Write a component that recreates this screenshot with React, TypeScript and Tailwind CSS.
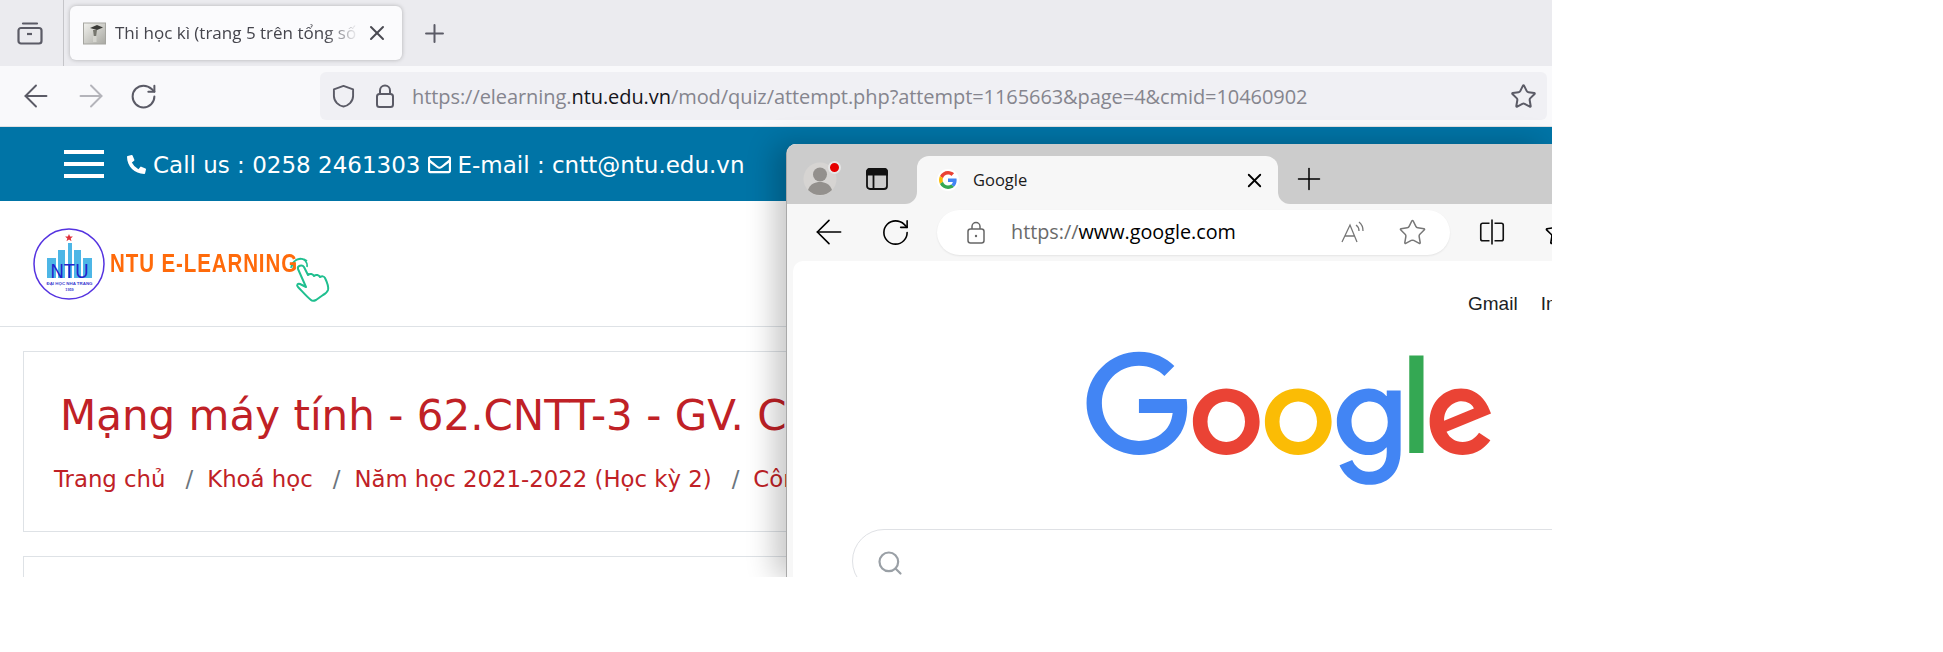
import { ArrowLeft, ArrowRight, Plus, RotateCw, Search, Star, X } from "lucide-react";
import { FaPhoneAlt, FaRegEnvelope } from "react-icons/fa";

const verdana = "font-['DejaVu_Sans',sans-serif]";
const ui = "font-['Open_Sans','Noto_Sans',sans-serif]";

export default function App() {
  return (
    <div className="relative h-[577px] w-[1552px] overflow-hidden bg-white">
      <FirefoxTabs />
      <FirefoxToolbar />
      <SiteTopBar />
      <SiteLogoRow />
      <CourseHeader />
      <div className="ml-[23px] mt-[24px] h-[60px] w-[1600px] border border-[#dee2e6]" />
      <EdgeWindow />
    </div>
  );
}

function FirefoxTabs() {
  return (
    <div className="flex h-[66px] items-center bg-[#ebebef]">
      <div className="flex h-full w-[64px] items-center justify-center border-r border-[#c5c5c9] pr-[3px]">
        <svg width="26" height="26" viewBox="0 0 26 26" fill="none" stroke="#5b5b66" strokeWidth="2.2">
          <path d="M6 3.5h14" strokeLinecap="round" />
          <rect x="1.500" y="8" width="23" height="15.500" rx="2.500" />
          <path d="M10 14h5" />
        </svg>
      </div>
      <div className="ml-[6px] flex h-[54px] w-[332px] items-center rounded-[6px] bg-[#fbfbfd] pl-[13px] shadow-[0_0_4px_rgba(0,0,0,0.25)]">
        <svg width="23" height="23" viewBox="0 0 23 23" className="shrink-0">
          <defs>
            <linearGradient id="cap-bg" x1="0" y1="0" x2="1" y2="1">
              <stop offset="0" stopColor="#f2f2ee" />
              <stop offset="1" stopColor="#a8a8a2" />
            </linearGradient>
          </defs>
          <rect x="0.500" y="1" width="22" height="21" fill="url(#cap-bg)" stroke="#a5a5a0" />
          <path d="M7 6l7-3 6 2.500-6 2.600z" fill="#3b3b38" />
          <path d="M10 8l1 7h2l1-7z" fill="#77776f" />
          <rect x="10" y="14" width="3.500" height="6" fill="#d5d5cf" />
        </svg>
        <div className={`ml-[9px] w-[244px] overflow-hidden whitespace-nowrap text-[17px] text-[#45454d] ${ui} [mask-image:linear-gradient(to_right,black_86%,transparent_100%)]`}>
          Thi học kì (trang 5 trên tổng số 7)
        </div>
        <X size={24} strokeWidth={2} absoluteStrokeWidth className="ml-[6px] text-[#4a4a52]" />
      </div>
      <Plus size={29} strokeWidth={2} absoluteStrokeWidth className="ml-[18px] text-[#5b5b66]" />
    </div>
  );
}

function FirefoxToolbar() {
  return (
    <div className="flex h-[61px] items-center border-b border-[#e0e0e2] bg-[#f9f9fb]">
      <ArrowLeft size={36} strokeWidth={1.9} absoluteStrokeWidth className="ml-[18px] text-[#5b5b66]" />
      <ArrowRight size={36} strokeWidth={1.9} absoluteStrokeWidth className="ml-[19px] text-[#b4b4ba]" />
      <RotateCw size={29} strokeWidth={2} absoluteStrokeWidth className="ml-[20px] text-[#5b5b66]" />
      <div className="ml-[162px] flex h-[48px] w-[1227px] items-center rounded-[6px] bg-[#f0f0f4]">
        <svg width="23" height="24" viewBox="0 0 24 24" fill="none" stroke="#5b5b66" strokeWidth="2" strokeLinejoin="round" className="ml-[12px]">
          <path d="M12 1.500L22 5v7c0 6-5 10-10 11-5-1-10-5-10-11V5z" />
        </svg>
        <svg width="18" height="24" viewBox="0 0 18 24" fill="none" stroke="#5b5b66" strokeWidth="2" className="ml-[21px]">
          <rect x="1" y="10" width="16" height="13" rx="2.500" />
          <path d="M4 10V6.500a5 5 0 0 1 10 0V10" />
        </svg>
        <div className={`ml-[18px] mt-[1px] whitespace-nowrap text-[20px] tracking-[-0.07px] text-[#85858e] ${ui}`}>
          https://elearning.<span className="text-[#15141a]">ntu.edu.vn</span>/mod/quiz/attempt.php?attempt=1165663&amp;page=4&amp;cmid=10460902
        </div>
        <Star size={27} strokeWidth={2} absoluteStrokeWidth className="ml-auto mr-[10px] text-[#5b5b66]" />
      </div>
    </div>
  );
}

function SiteTopBar() {
  return (
    <div className={`flex h-[74px] items-center bg-[#0074a6] text-[23px] text-white ${verdana}`}>
      <div className="ml-[64px] flex w-[40px] flex-col gap-[8px]">
        <div className="h-[4px] bg-white" />
        <div className="h-[4px] bg-white" />
        <div className="h-[4px] bg-white" />
      </div>
      <FaPhoneAlt size={19} className="ml-[23px]" />
      <span className="ml-[7px] mt-[3px]">Call us : 0258 2461303</span>
      <FaRegEnvelope size={23} className="ml-[8px]" />
      <span className="ml-[6px] mt-[3px]">E-mail : cntt@ntu.edu.vn</span>
    </div>
  );
}

function SiteLogoRow() {
  return (
    <div className="flex h-[126px] items-start border-b border-[#dee2e6] pl-[33px] pt-[27px]">
      <svg width="73" height="73" viewBox="0 0 73 73" className="shrink-0">
        <circle cx="36" cy="36" r="35" fill="white" stroke="#5533e0" strokeWidth="1.500" />
        <path d="M36 6l1.100 2.600h2.800l-2.200 1.800.8 2.800-2.500-1.600-2.500 1.600.8-2.800-2.200-1.800h2.800z" fill="#e0303a" />
        <rect x="14" y="30" width="9" height="20" fill="#4db6e6" />
        <rect x="25" y="22" width="7" height="28" fill="#4db6e6" />
        <rect x="35" y="15" width="4" height="35" fill="#4db6e6" />
        <rect x="41" y="22" width="7" height="28" fill="#4db6e6" />
        <rect x="50" y="30" width="9" height="20" fill="#4db6e6" />
        <text x="36.500" y="50" textAnchor="middle" fontSize="21" textLength="38" lengthAdjust="spacingAndGlyphs" fontFamily="Liberation Sans" fill="#2222cc">NTU</text>
        <text x="36.500" y="56.500" textAnchor="middle" fontSize="4.400" fontWeight="700" fontFamily="Liberation Sans" fill="#3a3ad0">ĐẠI HỌC NHA TRANG</text>
        <text x="36.500" y="63" textAnchor="middle" fontSize="3.800" fontWeight="700" fontFamily="Liberation Sans" fill="#3a3ad0">1959</text>
      </svg>
      <div className="ml-[4px] mt-[21px] w-[183px] shrink-0">
        <div className="origin-left scale-x-[0.82] whitespace-nowrap font-['Liberation_Sans',sans-serif] text-[25px] font-bold leading-[28px] tracking-[1.100px] text-[#ff6a0a]">
          NTU E-LEARNING
        </div>
      </div>
      <svg width="42" height="48" viewBox="0 0 42 48" fill="none" stroke="#1fbf8f" strokeWidth="2" strokeLinejoin="round" className="mt-[29px] shrink-0 overflow-visible">
        <path d="M5 12c-1-3 4-5 6-2l4 8c2-2 5-1 6 1 2-2 5-1 6 1 2-1 4-1 5 1 2 4 4 8 3 12-1 3-3 4-5 5l-7 5c-2 1-4 1-5 0-5-4-9-9-13-13-2-2 0-4 2-3l6 3z" />
        <path d="M1 12a7 7 0 1 1 13-2M-2 11a10 10 0 0 1 16-7" strokeWidth="1.600" />
      </svg>
    </div>
  );
}

function CourseHeader() {
  return (
    <div className={`ml-[23px] mt-[24px] h-[181px] w-[1600px] whitespace-nowrap border border-[#dee2e6] ${verdana} text-[#c02126]`}>
      <h1 className="ml-[36px] mt-[38px] text-[42px] font-normal leading-[52px]">Mạng máy tính - 62.CNTT-3 - GV. Cao</h1>
      <div className="ml-[30px] mt-[20px] flex text-[22.800px] leading-[34px]">
        <span>Trang chủ</span>
        <span className="ml-[20px] mr-[14px] text-[#6c757d]">/</span>
        <span>Khoá học</span>
        <span className="ml-[20px] mr-[14px] text-[#6c757d]">/</span>
        <span>Năm học 2021-2022 (Học kỳ 2)</span>
        <span className="ml-[20px] mr-[14px] text-[#6c757d]">/</span>
        <span>Công nghệ thông tin</span>
      </div>
    </div>
  );
}

function EdgeWindow() {
  return (
    <div className="absolute left-[786px] top-[144px] h-[433px] w-[766px] rounded-tl-[10px] border-l border-[#a9a9a9] bg-[#f7f7f7] shadow-[-12px_0_28px_rgba(0,0,0,0.22)]">
      <div className="h-full overflow-hidden rounded-tl-[9px]">
        <EdgeTabs />
        <EdgeToolbar />
        <GooglePage />
      </div>
    </div>
  );
}

function EdgeTabs() {
  return (
    <div className="flex h-[60px] bg-[#f7f7f7]">
      <div className="relative flex w-[130px] items-center rounded-br-[12px] bg-[#cccccc]">
        <svg width="34" height="34" viewBox="0 0 34 34" className="ml-[16px] mt-[10px]">
          <circle cx="17" cy="17" r="16.500" fill="#d6d4d2" />
          <circle cx="17" cy="12.500" r="7" fill="#93908d" />
          <path d="M5 28c2-6 7-8 12-8s10 2 12 8c-3 3-7 5-12 5s-9-2-12-5z" fill="#93908d" />
        </svg>
        <div className="absolute left-[41px] top-[17px] h-[13px] w-[13px] rounded-full border-2 border-[#e6e6e6] bg-[#e60000]" />
        <svg width="22" height="22" viewBox="0 0 22 22" fill="none" stroke="#111" strokeWidth="1.800" className="ml-[29px] mt-[10px]">
          <rect x="1" y="1" width="20" height="20" rx="3" />
          <path d="M1 6.500V4a3 3 0 0 1 3-3h14a3 3 0 0 1 3 3v2.500z" fill="#111" />
          <path d="M7.500 6.500V21" />
        </svg>
      </div>
      <div className="bg-[#cccccc] pt-[12px]">
        <div className="flex h-[48px] w-[361px] items-center rounded-t-[12px] bg-[#f7f7f7] pl-[20px]">
          <div className="flex h-[22px] w-[22px] items-center justify-center rounded-full bg-white">
            <GoogleG />
          </div>
          <span className={`ml-[14px] text-[16.500px] text-[#1a1a1a] ${ui}`}>Google</span>
          <X size={23} strokeWidth={1.800} absoluteStrokeWidth className="ml-auto mr-[12px] text-black" />
        </div>
      </div>
      <div className="flex flex-1 items-center rounded-bl-[12px] bg-[#cccccc] pl-[13px] pt-[10px]">
        <Plus size={36} strokeWidth={1.500} absoluteStrokeWidth className="text-black" />
      </div>
    </div>
  );
}

function GoogleG() {
  return (
    <svg width="18" height="18" viewBox="0 0 48 48">
      <path fill="#EA4335" d="M24 9.500c3.540 0 6.710 1.220 9.210 3.600l6.850-6.850C35.900 2.380 30.470 0 24 0 14.620 0 6.510 5.380 2.560 13.220l7.980 6.190C12.430 13.720 17.740 9.500 24 9.500z" />
      <path fill="#4285F4" d="M46.980 24.550c0-1.570-.15-3.090-.38-4.550H24v9.020h12.940c-.58 2.960-2.260 5.480-4.780 7.180l7.730 6c4.510-4.180 7.090-10.360 7.090-17.650z" />
      <path fill="#FBBC05" d="M10.530 28.590c-.48-1.450-.76-2.990-.76-4.590s.27-3.140.76-4.590l-7.980-6.190C.92 16.460 0 20.120 0 24c0 3.880.92 7.540 2.560 10.780l7.970-6.190z" />
      <path fill="#34A853" d="M24 48c6.480 0 11.930-2.130 15.890-5.810l-7.730-6c-2.150 1.450-4.920 2.300-8.160 2.300-6.260 0-11.570-4.220-13.470-9.910l-7.980 6.190C6.510 42.620 14.620 48 24 48z" />
    </svg>
  );
}

function EdgeToolbar() {
  return (
    <div className="flex h-[57px] items-center bg-[#f7f7f7] pb-[3px] pt-[2px]">
      <ArrowLeft size={40} strokeWidth={1.600} absoluteStrokeWidth className="ml-[22px] shrink-0 text-black" />
      <RotateCw size={31} strokeWidth={1.600} absoluteStrokeWidth className="ml-[31px] shrink-0 text-black" />
      <div className="ml-[26px] flex h-[45px] w-[513px] shrink-0 items-center rounded-full bg-white shadow-[0_1px_2px_rgba(0,0,0,0.08)]">
        <svg width="18" height="23" viewBox="0 0 18 23" fill="none" stroke="#666" strokeWidth="1.500" className="ml-[30px]">
          <rect x="1" y="8" width="16" height="14" rx="2.500" />
          <path d="M5 8V5.500a4 4 0 0 1 8 0V8" />
          <circle cx="9" cy="15" r="1.200" fill="#666" stroke="none" />
        </svg>
        <div className={`ml-[26px] whitespace-nowrap text-[19.800px] text-[#6a6a6a] ${ui}`}>
          https://<span className="text-black">www.google.com</span>
        </div>
        <svg width="26" height="24" viewBox="0 0 26 24" fill="none" stroke="#777" strokeWidth="1.300" className="ml-auto">
          <path d="M2 22L10 5l7 17M5 16h10" />
          <path d="M16 5a7 7 0 0 1 3 6M19 2a11 11 0 0 1 4 9" />
        </svg>
        <Star size={29} strokeWidth={1.500} absoluteStrokeWidth className="ml-[32px] mr-[23px] text-[#777]" />
      </div>
      <svg width="30" height="30" viewBox="0 0 24 24" fill="none" stroke="#111" strokeWidth="1.300" className="ml-[27px] shrink-0">
        <path d="M10 5H4.500A1.500 1.500 0 0 0 3 6.500v11A1.500 1.500 0 0 0 4.500 19H10M14 5h5.500A1.500 1.500 0 0 1 21 6.500v11a1.500 1.500 0 0 1-1.500 1.500H14M12 2v20" />
      </svg>
      <Star size={29} strokeWidth={1.600} absoluteStrokeWidth className="ml-[37px] shrink-0 text-black" />
    </div>
  );
}

function GooglePage() {
  return (
    <div className="ml-[6px] h-[320px] w-[900px] rounded-tl-[10px] bg-white font-['Liberation_Sans',sans-serif]">
      <div className="flex gap-[23px] pl-[675px] pt-[30px] text-[19px] leading-[26px] text-[#202124]">
        <span>Gmail</span>
        <span>Images</span>
      </div>
      <svg width="408" height="138" viewBox="0 0 272 92" className="ml-[293px] mt-[34px]">
        <path fill="#EA4335" d="M115.750 47.180c0 12.770-9.990 22.180-22.250 22.180s-22.250-9.410-22.250-22.180C71.250 34.320 81.240 25 93.500 25s22.250 9.320 22.250 22.180zm-9.740 0c0-7.980-5.790-13.440-12.510-13.440S80.990 39.200 80.990 47.180c0 7.900 5.790 13.440 12.510 13.440s12.510-5.550 12.510-13.440z" />
        <path fill="#FBBC05" d="M163.750 47.180c0 12.770-9.990 22.180-22.250 22.180s-22.250-9.410-22.250-22.180c0-12.850 9.990-22.180 22.250-22.180s22.250 9.320 22.250 22.180zm-9.740 0c0-7.980-5.790-13.440-12.510-13.440s-12.510 5.460-12.510 13.440c0 7.900 5.790 13.440 12.510 13.440s12.510-5.550 12.510-13.440z" />
        <path fill="#4285F4" d="M209.750 26.340v39.820c0 16.380-9.660 23.070-21.080 23.070-10.750 0-17.220-7.190-19.660-13.070l8.480-3.530c1.510 3.610 5.210 7.870 11.170 7.870 7.310 0 11.840-4.510 11.840-13v-3.190h-.34c-2.180 2.690-6.380 5.040-11.680 5.040-11.090 0-21.250-9.660-21.250-22.090 0-12.520 10.160-22.260 21.250-22.260 5.290 0 9.490 2.350 11.680 4.960h.34v-3.610h9.250zm-8.560 20.920c0-7.810-5.210-13.520-11.840-13.520-6.720 0-12.350 5.710-12.350 13.520 0 7.730 5.630 13.360 12.350 13.360 6.630 0 11.840-5.630 11.840-13.360z" />
        <path fill="#34A853" d="M225 3v65h-9.500V3h9.500z" />
        <path fill="#EA4335" d="M262.020 54.480l7.560 5.040c-2.440 3.610-8.320 9.830-18.480 9.830-12.600 0-22.010-9.740-22.010-22.180 0-13.190 9.490-22.180 20.920-22.180 11.510 0 17.140 9.160 18.980 14.110l1.010 2.520-29.650 12.280c2.270 4.450 5.800 6.720 10.750 6.720 4.960 0 8.400-2.440 10.920-6.140zm-23.270-7.980l19.820-8.230c-1.090-2.770-4.370-4.700-8.230-4.700-4.950 0-11.840 4.370-11.590 12.930z" />
        <path fill="#4285F4" d="M35.290 41.410V32H67c.31 1.640.47 3.580.47 5.680 0 7.060-1.930 15.790-8.150 22.010-6.050 6.300-13.780 9.660-24.020 9.660C16.320 69.350.36 53.890.36 34.910.36 15.930 16.320.47 35.300.47c10.500 0 17.980 4.120 23.600 9.490l-6.640 6.640c-4.030-3.780-9.490-6.720-16.970-6.720-13.860 0-24.700 11.170-24.700 25.030 0 13.860 10.840 25.030 24.700 25.030 8.990 0 14.110-3.610 17.390-6.890 2.660-2.660 4.410-6.460 5.100-11.650l-22.490.01z" />
      </svg>
      <div className="ml-[59px] mt-[40px] flex h-[64px] w-[800px] items-center rounded-[32px] border border-[#dfe1e5] pl-[23px]">
        <Search size={28} strokeWidth={2.200} absoluteStrokeWidth className="mt-[4px] text-[#9aa0a6]" />
      </div>
    </div>
  );
}
